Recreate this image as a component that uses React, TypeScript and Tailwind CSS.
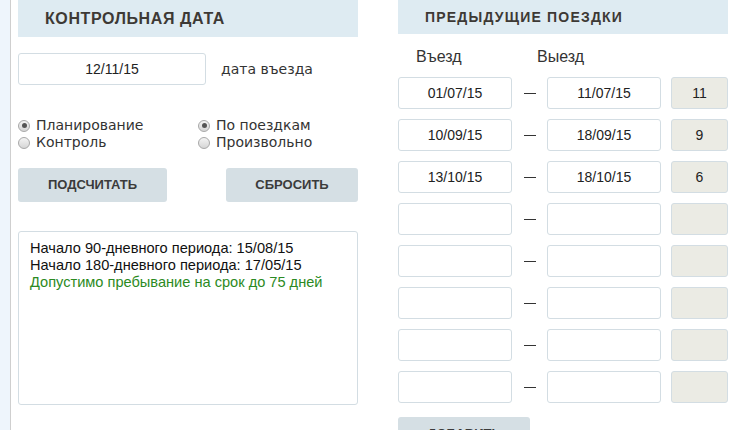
import React from "react";

const arial = { fontFamily: '"Liberation Sans", Arial, sans-serif' };
const deja = { fontFamily: '"DejaVu Sans", Verdana, sans-serif' };

function Radio({ checked, label }: { checked?: boolean; label: string }) {
  return (
    <div className="flex items-center h-[17px]">
      <span className="w-[12px] h-[12px] rounded-full border border-[#a8a8a8] bg-gradient-to-b from-[#f4f4f4] to-[#d6d6d6] flex items-center justify-center">
        {checked && <span className="w-[5px] h-[5px] rounded-full bg-[#555]" />}
      </span>
      <span className="ml-[6px] text-[14px] text-[#333] leading-[17px]" style={deja}>
        {label}
      </span>
    </div>
  );
}

const rows: [string, string, string][] = [
  ["01/07/15", "11/07/15", "11"],
  ["10/09/15", "18/09/15", "9"],
  ["13/10/15", "18/10/15", "6"],
  ["", "", ""],
  ["", "", ""],
  ["", "", ""],
  ["", "", ""],
  ["", "", ""],
];

export default function App() {
  return (
    <div className="flex h-[430px] w-[746px] overflow-hidden bg-white" style={arial}>
      <div className="w-[11px] bg-[#eef5fc] border-r border-[#cfcfcf] shrink-0" />
      <div className="flex pl-[7px] items-start">
        {/* Left column */}
        <div className="w-[340px] flex flex-col shrink-0">
          <div className="h-[37px] shrink-0 bg-[#deebf2] flex items-center pl-[27px]">
            <span className="text-[16px] font-bold text-[#3d3935] tracking-[0.6px]">КОНТРОЛЬНАЯ ДАТА</span>
          </div>
          <div className="mt-[16px] flex items-center shrink-0">
            <div className="w-[188px] h-[32px] border border-[#d3dde3] rounded-[3px] flex items-center justify-center text-[14px] text-[#222]">
              12/11/15
            </div>
            <span className="ml-[15px] text-[14px] text-[#333]" style={deja}>
              дата въезда
            </span>
          </div>
          <div className="mt-[32px] flex shrink-0">
            <div className="w-[180px] flex flex-col">
              <Radio checked label="Планирование" />
              <Radio label="Контроль" />
            </div>
            <div className="flex flex-col">
              <Radio checked label="По поездкам" />
              <Radio label="Произвольно" />
            </div>
          </div>
          <div className="mt-[17px] flex justify-between shrink-0">
            <div className="w-[149px] h-[34px] rounded-[3px] bg-[#d5dfe4] flex items-center justify-center text-[13px] font-bold text-[#3b3b3b]">
              ПОДСЧИТАТЬ
            </div>
            <div className="w-[132px] h-[34px] rounded-[3px] bg-[#d5dfe4] flex items-center justify-center text-[13px] font-bold text-[#3b3b3b]">
              СБРОСИТЬ
            </div>
          </div>
          <div className="mt-[29px] h-[174px] shrink-0 border border-[#d3dde3] rounded-[3px] px-[11px] pt-[8px] text-[14.6px] leading-[17px] text-[#111]">
            <div>Начало 90-дневного периода: 15/08/15</div>
            <div>Начало 180-дневного периода: 17/05/15</div>
            <div className="text-[#2b8a23]">Допустимо пребывание на срок до 75 дней</div>
          </div>
        </div>
        {/* Right column */}
        <div className="w-[330px] ml-[40px] flex flex-col shrink-0">
          <div className="h-[34px] shrink-0 bg-[#deebf2] flex items-center pl-[27px]">
            <span className="text-[14px] font-bold text-[#3d3935] tracking-[1.2px]">ПРЕДЫДУЩИЕ ПОЕЗДКИ</span>
          </div>
          <div className="mt-[13px] h-[20px] shrink-0 flex items-center text-[16px] text-[#333]">
            <span className="ml-[18px] w-[121px]">Въезд</span>
            <span>Выезд</span>
          </div>
          <div className="mt-[10px] flex flex-col gap-[10px] shrink-0">
            {rows.map((r, i) => (
              <div key={i} className="flex items-center h-[32px] shrink-0">
                <div className="w-[114px] h-[32px] border border-[#d3dde3] rounded-[3px] flex items-center justify-center text-[14px] text-[#222]">
                  {r[0]}
                </div>
                <div className="w-[35px] flex justify-center">
                  <span className="block w-[12px] h-[1px] bg-[#333]" />
                </div>
                <div className="w-[114px] h-[32px] border border-[#d3dde3] rounded-[3px] flex items-center justify-center text-[14px] text-[#222]">
                  {r[1]}
                </div>
                <div className="ml-[10px] w-[57px] h-[32px] border border-[#d3dde3] rounded-[3px] bg-[#ebebe4] flex items-center justify-center text-[14px] text-[#222]">
                  {r[2]}
                </div>
              </div>
            ))}
          </div>
          <div className="mt-[14px] w-[132px] h-[34px] shrink-0 rounded-[3px] bg-[#d5dfe4] flex items-center justify-center text-[13px] font-bold text-[#3b3b3b]">
            ДОБАВИТЬ
          </div>
        </div>
      </div>
    </div>
  );
}
